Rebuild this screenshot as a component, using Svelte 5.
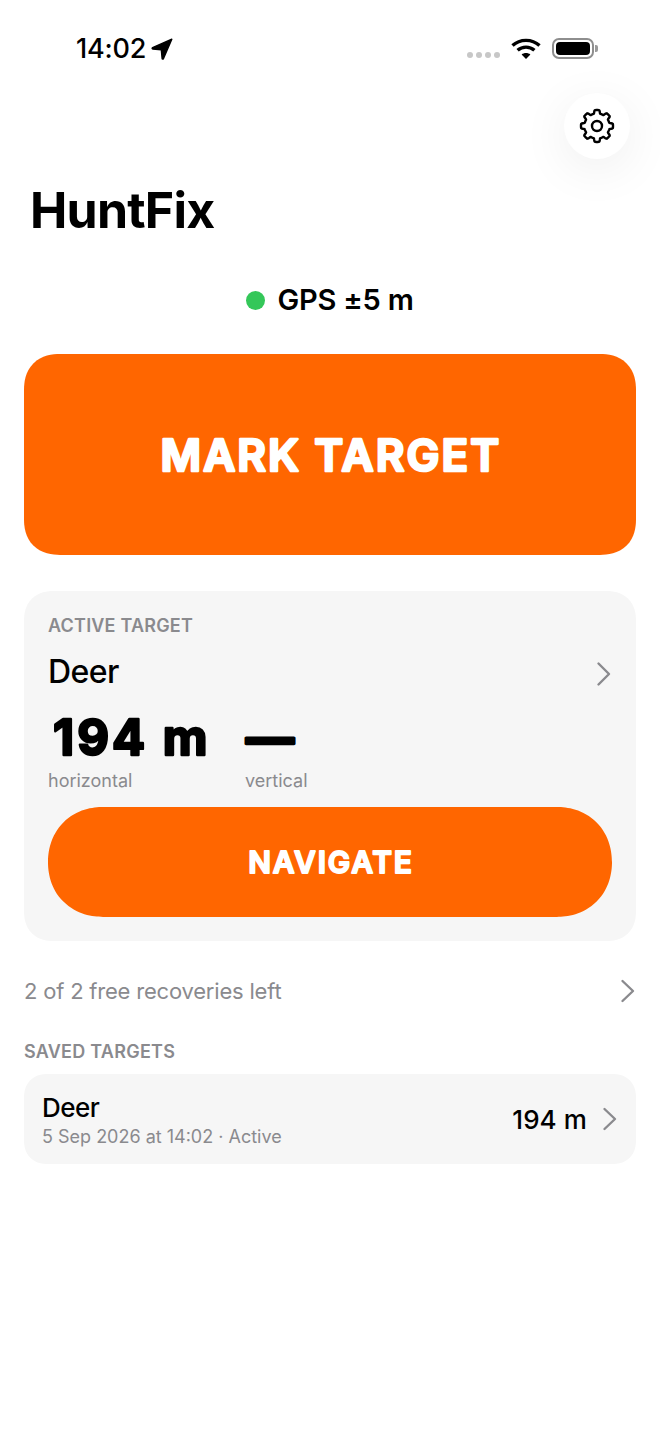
<script>
  function gearPath(cx, cy, ri, ro, teeth) {
    const n = teeth * 24;
    let d = "";
    for (let i = 0; i < n; i++) {
      const a = (i / n) * Math.PI * 2 - Math.PI / 2;
      const c = Math.cos(a * teeth + Math.PI * teeth / 2);
      const t = Math.max(0, Math.min(1, 0.5 + c * 0.95));
      const s = t * t * (3 - 2 * t);
      const r = ri + (ro - ri) * s;
      d += (i ? "L" : "M") + (cx + r * Math.cos(a)).toFixed(2) + " " + (cy + r * Math.sin(a)).toFixed(2);
    }
    return d + "Z";
  }
  const gear = gearPath(18, 18, 12.6, 16, 8);
</script>

<div class="page">
  <header class="status">
    <div class="time">
      <span>14:02</span>
      <svg class="loc" width="22" height="22" viewBox="0 0 22 22"><path d="M20.8 1.2 L12.4 20.6 C12 21.4 11.2 21.2 11.1 20.4 L10.3 11.8 L1.8 11 C1 10.9 0.8 10 1.6 9.6 Z" fill="#000" stroke="#000" stroke-width="1.4" stroke-linejoin="round"/></svg>
    </div>
    <div class="right">
      <div class="dots"><i></i><i></i><i></i><i></i></div>
      <svg class="wifi" width="30" height="22" viewBox="0 0 30 22" fill="none" stroke="#000" stroke-width="3.4">
        <path d="M1.5 7.6 C9 0.6 21 0.6 28.5 7.6"/>
        <path d="M6.6 12.3 C11.4 8 18.6 8 23.4 12.3"/>
        <path d="M15 21 L10.6 16.6 C13 14.6 17 14.6 19.4 16.6 Z" fill="#000" stroke="none"/>
      </svg>
      <div class="battery"><div class="shell"><div class="fill"></div></div><div class="cap"></div></div>
    </div>
  </header>

  <div class="gear-row">
    <button class="gear" aria-label="Settings">
      <svg width="36" height="36" viewBox="0 0 36 36" fill="none" stroke="#000" stroke-width="2.4" stroke-linejoin="round">
        <path d={gear}/>
        <circle cx="18" cy="18" r="5"/>
      </svg>
    </button>
  </div>

  <h1>HuntFix</h1>

  <div class="gps"><span class="dot"></span><span>GPS ±5 m</span></div>

  <button class="mark">
    <svg width="612" height="201" viewBox="0 0 612 201"><text class="r mark-t" x="307" y="116.5" text-anchor="middle">MARK TARGET</text></svg>
  </button>

  <section class="card">
    <div class="label">ACTIVE TARGET</div>
    <div class="title-row">
      <span class="name">Deer</span>
      <svg class="chev" width="16" height="26" viewBox="0 0 16 26" fill="none"><path d="M2.5 2.5 L13 13 L2.5 23.5" stroke="#8a8a8e" stroke-width="2.4" stroke-linecap="round" stroke-linejoin="round"/></svg>
    </div>
    <div class="metrics">
      <div class="metric m1">
        <svg width="190" height="60" viewBox="0 0 190 60"><text class="r big-t" x="5" y="47.5">194 m</text></svg>
        <div class="sub">horizontal</div>
      </div>
      <div class="metric">
        <svg width="60" height="60" viewBox="0 0 60 60"><text class="r dash-t" x="1" y="47.5">—</text></svg>
        <div class="sub">vertical</div>
      </div>
    </div>
    <button class="nav">
      <svg width="564" height="110" viewBox="0 0 564 110"><text class="r nav-t" x="283" y="65.5" text-anchor="middle">NAVIGATE</text></svg>
    </button>
  </section>

  <div class="free">
    <span>2 of 2 free recoveries left</span>
    <svg class="chev" width="16" height="26" viewBox="0 0 16 26" fill="none"><path d="M2.5 3 L13 13 L2.5 23" stroke="#8a8a8e" stroke-width="2.4" stroke-linecap="round" stroke-linejoin="round"/></svg>
  </div>

  <div class="label saved">SAVED TARGETS</div>

  <div class="row">
    <div class="row-left">
      <div class="row-name">Deer</div>
      <div class="row-sub">5 Sep 2026 at 14:02 · Active</div>
    </div>
    <div class="row-right">
      <span class="row-dist">194 m</span>
      <svg class="chev" width="16" height="26" viewBox="0 0 16 26" fill="none"><path d="M2.5 3 L13 13 L2.5 23" stroke="#8a8a8e" stroke-width="2.4" stroke-linecap="round" stroke-linejoin="round"/></svg>
    </div>
  </div>
</div>

<style>
  :global(body) { margin: 0; background: #fff; }
  .page {
    width: 660px; height: 1434px; box-sizing: border-box; padding: 0 24px;
    font-family: Inter, "Liberation Sans", sans-serif; color: #000; overflow: hidden;
    display: flex; flex-direction: column;
  }
  .status { height: 93px; flex: none; margin: 0 -24px; padding: 0 62px 0 76px; display: flex; justify-content: space-between; align-items: flex-start; box-sizing: border-box; }
  .time { display: flex; align-items: center; gap: 5px; font-size: 27px; font-weight: 500; margin-top: 33px; line-height: 32px; letter-spacing: -0.2px; }
  .right { display: flex; align-items: flex-start; gap: 11px; margin-top: 38px; }
  .dots { display: flex; gap: 3px; margin-top: 14px; }
  .dots i { width: 6px; height: 6px; border-radius: 50%; background: #c7c7c7; display: block; }
  .wifi { display: block; }
  .battery { display: flex; align-items: center; gap: 1px; }
  .shell { border: 2px solid #8e8e8e; border-radius: 7px; padding: 2px; width: 34px; height: 13px; }
  .fill { width: 100%; height: 100%; background: #000; border-radius: 4px; }
  .cap { width: 3px; height: 7px; background: #9a9a9a; border-radius: 0 2px 2px 0; }
  .gear-row { display: flex; justify-content: flex-end; padding-right: 6px; height: 66px; flex: none; }
  .gear { width: 66px; height: 66px; border-radius: 50%; background: #fff; border: none; padding: 0; display: flex; align-items: center; justify-content: center; box-shadow: 0 10px 50px rgba(0,0,0,0.07); }
  h1 { font-size: 50px; font-weight: 700; margin: 21px 0 0 6px; line-height: 60px; letter-spacing: -0.8px; }
  .gps { display: flex; align-items: center; justify-content: center; gap: 12px; font-size: 29px; font-weight: 600; line-height: 36px; margin-top: 42px; letter-spacing: -0.2px; }
  .dot { width: 19px; height: 19px; border-radius: 50%; background: #34c759; }
  .mark { margin-top: 36px; height: 201px; flex: none; border: none; border-radius: 36px; corner-shape: superellipse(1.2); background: #ff6600; padding: 0; display: block; }
  svg { display: block; overflow: visible; }
  .r { font-family: Inter, sans-serif; stroke-linejoin: round; }
  .mark-t { font-size: 44px; font-weight: 600; fill: #fff; stroke: #fff; stroke-width: 2.6px; letter-spacing: 2.1px; }
  .big-t { font-size: 49px; font-weight: 700; fill: #000; stroke: #000; stroke-width: 2.4px; letter-spacing: 3px; }
  .dash-t { font-size: 48px; font-weight: 700; fill: #000; stroke: #000; stroke-width: 3px; }
  .nav-t { font-size: 30px; font-weight: 600; fill: #fff; stroke: #fff; stroke-width: 1.8px; letter-spacing: 1.8px; }
  .card { margin-top: 36px; height: 350px; flex: none; box-sizing: border-box; background: #f6f6f6; border-radius: 30px; corner-shape: superellipse(1.2); padding: 24px; display: flex; flex-direction: column; }
  .label { font-size: 18px; font-weight: 600; color: #8a8a8e; line-height: 22px; letter-spacing: 0.2px; }
  .title-row { display: flex; justify-content: space-between; align-items: center; margin-top: 15px; height: 40px; }
  .title-row .chev { margin-top: 3px; }
  .name { font-size: 32px; font-weight: 550; line-height: 40px; letter-spacing: -0.6px; }
  .metrics { display: flex; margin-top: 15px; }
  .m1 { width: 197px; }
  .sub { font-size: 18px; color: #8a8a8e; line-height: 22px; margin-top: 3px; }
  .nav { margin-top: 15px; height: 110px; flex: none; border: none; border-radius: 55px; corner-shape: superellipse(1.08); background: #ff6600; padding: 0; display: block; }
  .free { display: flex; justify-content: space-between; align-items: center; margin-top: 36px; height: 28px; font-size: 22px; letter-spacing: -0.2px; color: #8a8a8e; flex: none; }
  .saved { margin-top: 36px; letter-spacing: 0.25px; }
  .row { margin-top: 11px; height: 90px; flex: none; box-sizing: border-box; background: #f6f6f6; border-radius: 24px; corner-shape: superellipse(1.2); padding: 0 18px; display: flex; justify-content: space-between; align-items: center; }
  .row-name { font-size: 26px; font-weight: 550; line-height: 32px; letter-spacing: -0.5px; margin-top: 2px; }
  .row-sub { font-size: 18px; color: #8a8a8e; line-height: 24px; margin-top: 1px; }
  .row-right { display: flex; align-items: center; gap: 15px; }
  .row-dist { font-size: 26px; font-weight: 550; letter-spacing: 0.1px; }
</style>
